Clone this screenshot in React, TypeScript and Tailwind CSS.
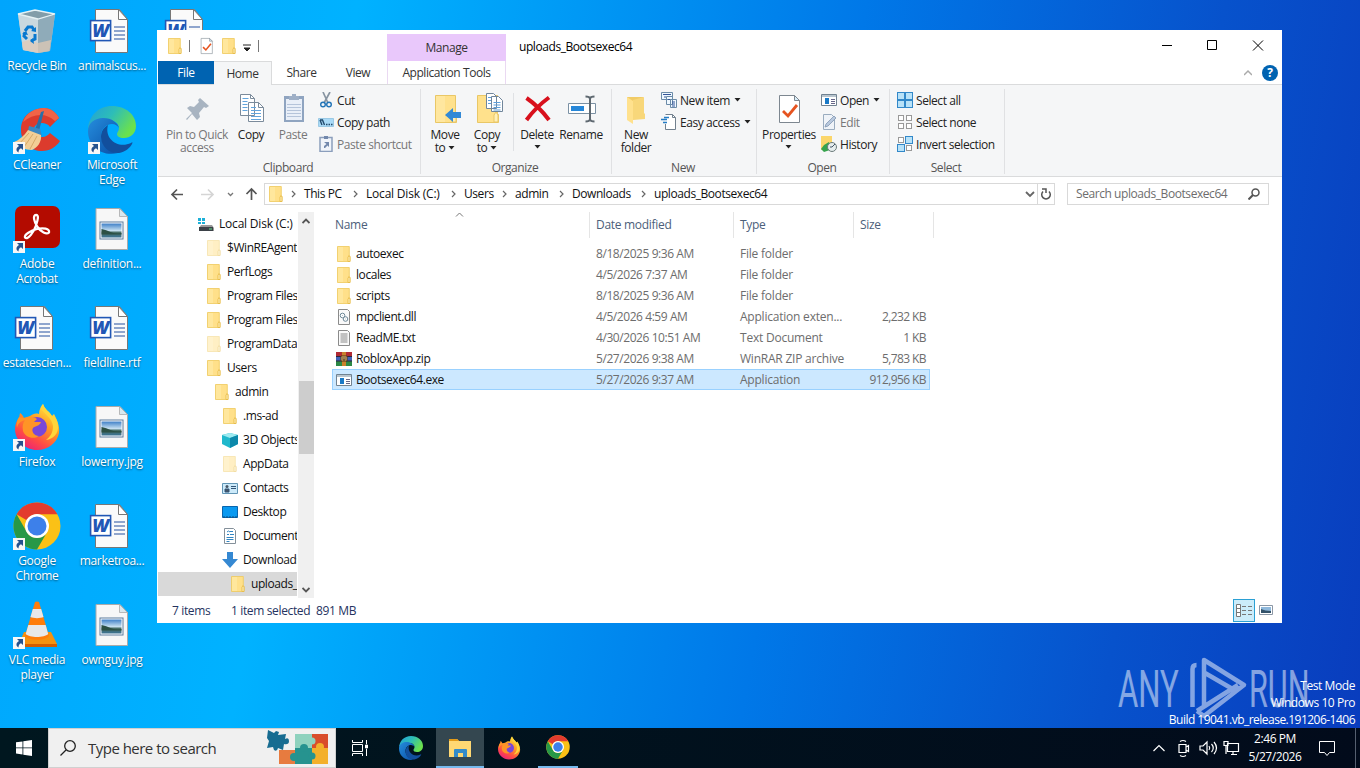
import type { ReactNode } from 'react';

type IconProps = { className?: string };

/* ---------- small shared icons ---------- */

const Folder = ({ className = 'w-4 h-4' }: IconProps) => (
  <svg className={className} viewBox="0 0 16 16">
    <path d="M1.500 .5h11.8v9l.7.8v5.2H1.500z" fill="#ffe08a" stroke="#efc95c" strokeWidth=".8" />
    <path d="M2 1h5v14H2z" fill="#ffe9a5" opacity=".7" />
    <path d="M12 11.200l1-1.700 1 1.500v4.500h-2z" fill="#fff0bd" stroke="#e6b73f" strokeWidth=".8" />
  </svg>
);

const FadedFolder = () => <Folder className="w-4 h-4 opacity-50" />;

const WordDoc = () => (
  <svg className="w-12 h-12" viewBox="2 -2 48 48">
    <path d="M9.500 .5h24l8 10v33h-32z" fill="#fafafa" stroke="#777" />
    <path d="M32.500 .5v10h9z" fill="#fff" stroke="#777" />
    <path d="M28 18h11M28 22h11M28 26h11M28 30h11" stroke="#24509f" strokeWidth="1.200" />
    <rect x="4.600" y="11.600" width="20" height="20" fill="#fff" stroke="#2157b5" strokeWidth="1.600" />
    <text x="14.600" y="28" textAnchor="middle" fontSize="18" fontWeight="800" fontStyle="italic" fontFamily="Open Sans, sans-serif" fill="#2157b5">W</text>
  </svg>
);

const JpgDoc = () => (
  <svg className="w-12 h-12" viewBox="1.500 -1 48 48">
    <defs>
      <linearGradient id="photo" x1="0" y1="0" x2="0" y2="1">
        <stop offset="0" stopColor="#3f80c8" />
        <stop offset=".5" stopColor="#c4def0" />
        <stop offset=".65" stopColor="#436a62" />
        <stop offset="1" stopColor="#3c7496" />
      </linearGradient>
    </defs>
    <path d="M9.500 2.500h24l7.500 8v33H9.500z" fill="#f7f7f7" stroke="#aaa" />
    <path d="M33 2.500v8h8z" fill="#d9e8ee" stroke="#aaa" strokeWidth=".8" />
    <rect x="13.500" y="16" width="23" height="17" fill="#fff" stroke="#5c7c9e" />
    <rect x="15" y="17.500" width="20" height="14" fill="url(#photo)" />
    <path d="M15 23q5 1 9 3t11 1v1.500H15z" fill="#2c5044" />
  </svg>
);

const Shortcut = () => (
  <svg className="absolute left-0 bottom-0 w-3 h-3" viewBox="0 0 12 12">
    <path d="M0 0h12v12H0z" fill="#f7f7f7" />
    <path d="M4 2h6v6L8 6.200C6 7 5.500 8.500 5.500 10.500 2.500 9 3 5.500 6 4z" fill="#26528e" />
  </svg>
);

const RecycleBin = () => (
  <svg className="w-12 h-12" viewBox="1 -2 48 48">
    <path d="M6 5l17-4 20 4-5 37-12 2-15-3z" fill="#a9c3d3" />
    <path d="M6 5l20 5 1 34-16-3z" fill="#c9d8df" />
    <path d="M26 10l17-5-5 37-12 2z" fill="#8fabb9" />
    <path d="M6 5l17-4 20 4-17 5z" fill="#829da9" stroke="#e6f2f5" strokeWidth="1.300" />
    <path d="M10 33l7-2 9 3v10l-15-3zM26 34l13-3-1.500 11-11.500 2z" fill="#e0c9b5" opacity=".75" />
    <path d="M13 22l3-4h4l2 3M23 25v5l-4 2M15 30l-3-3 1-4" fill="none" stroke="#0878cf" strokeWidth="3" />
    <path d="M19 22l5 1v-5zM21 29l-3 3 4 3zM10 25l4-3 2 4z" fill="#0878cf" />
  </svg>
);

const CCleaner = () => (
  <svg className="w-12 h-12" viewBox="0 2 48 48">
    <path d="M46 14l-9 9c-2-3-5-4-8-4-11 0-11 14 0 14 4 0 6-2 8-4l10 8c-4 6-10 10-18 10C18 47 8 39 8 26S17 5 31 4c6 0 12 4 15 10z" fill="#dc3b2d" />
    <path d="M10 18C13 9 22 4 31 4c6 0 12 4 15 10l-4 3C32 8 20 10 10 18z" fill="#f06448" />
    <path d="M28 8l3-1-5 20-4-1z" fill="#2870a8" />
    <path d="M16 22l11 3 2 7-14-5z" fill="#3b88c2" />
    <path d="M15 26l13 5c1 7-4 13-9 15-7 0-13-3-18-8 5-2 10-6 14-12z" fill="#f2ce96" />
    <path d="M16 29L6 40M20 30l-9 13M24 32l-7 13" stroke="#d7a968" />
  </svg>
);

const Edge = ({ className = 'w-12 h-12' }: IconProps) => (
  <svg className={className} viewBox="0 0 48 48">
    <defs>
      <linearGradient id="edgeTop" x1="0" y1="0" x2="1" y2=".5">
        <stop offset="0" stopColor="#229fd9" />
        <stop offset=".5" stopColor="#2dbdb8" />
        <stop offset="1" stopColor="#6be14d" />
      </linearGradient>
      <linearGradient id="edgeLow" x1="0" y1="0" x2="1" y2="1">
        <stop offset="0" stopColor="#258ddd" />
        <stop offset="1" stopColor="#0a4ea5" />
      </linearGradient>
    </defs>
    <path d="M0 23C1 10 10 0 24 0c14 0 24 9 24 20 0 8-6 12-12 12-5 0-7-2-7-4 0-2 2-3 2-6 0-5-5-8-11-8C11 14 3 16 0 23z" fill="url(#edgeTop)" />
    <path d="M0 25c0-8 7-13 15-13 9 0 15 5 16 10-1-2-4-4-7-4-6 0-11 5-11 12 0 9 8 16 17 17C13 51 0 40 0 25z" fill="url(#edgeLow)" />
    <path d="M20 19c-5 3-7 7-7 12 0 9 8 17 18 16 6-1 11-5 13-9 1-2 0-2-1-1-13 6-27-4-23-18z" fill="#124f9d" />
  </svg>
);

const Acrobat = () => (
  <svg className="w-12 h-12" viewBox="0 -1 48 48">
    <rect x="2" width="45" height="42" rx="7" fill="#b30b00" />
    <path d="M23 9c-3.500 0-2 7 1.500 12s9 8 11.500 5.500c1-4-6-5-12-3.500s-13 5.500-12 8.500c3 3 9-6 11-12s3-10.500 0-10.500z" fill="none" stroke="#fff" strokeWidth="2.300" />
  </svg>
);

const Firefox = ({ className = 'w-12 h-12' }: IconProps) => (
  <svg className={className} viewBox="0 0 48 48">
    <defs>
      <linearGradient id="fox" x1=".8" y1="0" x2=".2" y2="1">
        <stop offset="0" stopColor="#fff14a" />
        <stop offset=".4" stopColor="#ff9a22" />
        <stop offset=".72" stopColor="#ff4b45" />
        <stop offset="1" stopColor="#e81b80" />
      </linearGradient>
    </defs>
    <path d="M26 11c0-4 2-8 4-10 2 6 6 7 9 12l2-2c3 6 6 12 5 19-2 10-11 17-22 17S2 38 2 26c0-5 2-9 4-11l1-5c2 1 3 3 4 5l6-2c3-2 5-3 9-2z" fill="url(#fox)" />
    <circle cx="24" cy="24" r="10" fill="#7947d8" />
    <path d="M28 6c4 5 11 9 12 17 0 7-3 11-7 14 7-1 13-6 12-15-1-7-4-9-6-9-3-5-7-6-9-12-1 2-2 4-2 5z" fill="#ffd53a" />
    <path d="M6 14l5 1c4-1 9-2 13 1l-3 3h7c-1 4-6 4-8 6-2 3 1 8 6 8-6 4-14 1-16-5-1-5 0-8 2-11-4 1-7 3-8 8-1-4 0-8 2-11z" fill="#ff9426" />
  </svg>
);

const Chrome = ({ className = 'w-12 h-12' }: IconProps) => (
  <svg className={className} viewBox="0 0 48 48">
    <circle cx="24" cy="24" r="23.500" fill="#fbc116" />
    <path d="M3.600 12.300A23.500 23.500 0 0 1 44.400 12.300H24a11.700 11.700 0 0 0-10.300 6z" fill="#e33b2e" />
    <path d="M3.600 12.300A23.500 23.500 0 0 0 24 47.500l10.200-17.600a11.700 11.700 0 0 1-20.400 0z" fill="#279847" />
    <circle cx="24" cy="24" r="12" fill="#fff" />
    <circle cx="24" cy="24" r="9.500" fill="#3d80ea" />
  </svg>
);

const Vlc = () => (
  <svg className="w-12 h-12" viewBox="0 0 48 48">
    <path d="M11 31h27l6 12H6z" fill="#f5920f" />
    <path d="M6 43h38v3H6z" fill="#d45e00" />
    <path d="M22 1q2-1 4 0l10 34c-4 5-20 5-24 0z" fill="#ff7d0a" />
    <path d="M19.800 8h8.400l2.300 8c-3 1.500-10 1.500-13 0zM15.300 24h17.400l2.500 9c-4 4-18.500 4-22.500 0z" fill="#e8e8e8" />
  </svg>
);

const desktopIcons: { label: string; icon: ReactNode; link?: boolean }[] = [
  { label: 'Recycle Bin', icon: <RecycleBin /> },
  { label: 'CCleaner', icon: <CCleaner />, link: true },
  { label: 'Adobe Acrobat', icon: <Acrobat />, link: true },
  { label: 'estatescien...', icon: <WordDoc /> },
  { label: 'Firefox', icon: <Firefox />, link: true },
  { label: 'Google Chrome', icon: <Chrome />, link: true },
  { label: 'VLC media player', icon: <Vlc />, link: true },
  { label: 'animalscus...', icon: <WordDoc /> },
  { label: 'Microsoft Edge', icon: <Edge />, link: true },
  { label: 'definition...', icon: <JpgDoc /> },
  { label: 'fieldline.rtf', icon: <WordDoc /> },
  { label: 'lowerny.jpg', icon: <JpgDoc /> },
  { label: 'marketroa...', icon: <WordDoc /> },
  { label: 'ownguy.jpg', icon: <JpgDoc /> },
  { label: '', icon: <WordDoc /> },
];

const Desktop = () => (
  <div className="grid grid-flow-col grid-rows-[repeat(7,99px)] auto-cols-[75px] w-fit pt-[7px] -ml-[0.5px] tracking-[-0.3px]">
    {desktopIcons.map((item, i) => (
      <div key={i} className="flex flex-col items-center text-white">
        <div className="relative w-12 h-12">
          {item.icon}
          {item.link && <Shortcut />}
        </div>
        <span className="w-[73px] mt-[3px] text-center leading-[15px] [text-shadow:0_1px_2px_#0008]">{item.label}</span>
      </div>
    ))}
  </div>
);

/* ---------- ribbon ---------- */

const Caret = () => (
  <svg className="inline-block w-[7px] h-1 shrink-0" viewBox="0 0 7 4">
    <path d="M.5 0h6l-3 3.500z" fill="#222" />
  </svg>
);

const BigButton = ({ icon, lines, width, disabled, caret }: { icon: ReactNode; lines: string[]; width: string; disabled?: boolean; caret?: boolean }) => (
  <div className={`flex flex-col items-center pt-2 ${width} ${disabled ? 'text-[#777]' : 'text-[#222]'}`}>
    <span className="pl-px">{icon}</span>
    <div className="mt-[3px] flex flex-col items-center leading-[13px] whitespace-nowrap">
      {lines.map((line, i) => (
        <span key={line} className="flex items-center gap-[3px] h-[13px]">
          {line}
          {caret && i === lines.length - 1 && <Caret />}
        </span>
      ))}
    </div>
  </div>
);

const SmallButton = ({ icon, label, disabled, caret }: { icon: ReactNode; label: string; disabled?: boolean; caret?: boolean }) => (
  <div className={`flex items-center h-[22px] whitespace-nowrap ${disabled ? 'text-[#777]' : 'text-[#222]'}`}>
    {icon}
    <span className="ml-[3px] pt-px">{label}</span>
    {caret && <span className="ml-1 flex"><Caret /></span>}
  </div>
);

const Group = ({ title, width, children }: { title: string; width: string; children: ReactNode }) => (
  <div className={`relative flex flex-col h-[91px] ${width}`}>
    <div className="flex h-[76px]">{children}</div>
    <div className="pr-[3px] text-center text-[#555] leading-[14px]">{title}</div>
    <div className="absolute right-0 top-1 h-[85px] w-px bg-[#e0e1e3]" />
  </div>
);

const Pages = ({ className = 'w-8 h-8' }: IconProps) => (
  <svg className={className} viewBox="0 0 32 32">
    <path d="M4.500 1.500h10l4 4v17h-14zM12.500 9.500h10l5 5v14h-15z" fill="#fff" stroke="#7b8b9b" />
    <path d="M14.500 1.500v4h4M22.500 9.500v5h5" fill="none" stroke="#7b8b9b" />
    <path d="M6.500 5.500h6M6.500 8.500h5M6.500 11.500h5M6.500 14.500h5M6.500 17.500h5M15 14.500h5M15 17.500h10M15 20.500h10M15 23.500h10M15 26.500h10" stroke="#62a4dc" />
  </svg>
);

const TallFolder = ({ children }: { children?: ReactNode }) => (
  <svg className="w-8 h-8" viewBox="0 0 32 32">
    <path d="M5.500 2.500h20v18l1 1v8h-21z" fill="#ffe18c" stroke="#e9c766" />
    <path d="M6 3h9v26H6z" fill="#ffe9a6" opacity=".7" />
    <path d="M22 29v-7l2-3 2 3v7z" fill="#fff0ba" stroke="#e9c766" />
    {children}
  </svg>
);

const Clipboard = () => (
  <svg className="w-8 h-8" viewBox="0 0 32 32">
    <path d="M6 3h20v26H6z" fill="#8fa4c0" />
    <path d="M8 6h16v21H8z" fill="#e9eff8" />
    <path d="M11 3h3V1h4v2h3v4H11z" fill="#9eafc6" />
    <path d="M9 11.500h14M9 14.500h14M9 17.500h14M9 20.500h14M9 23.500h14" stroke="#b5c4da" />
  </svg>
);

const Square = ({ x, y, on }: { x: number; y: number; on: boolean }) => (
  <rect x={x} y={y} width={on ? 7 : 5} height={on ? 7 : 5} fill={on ? '#b8e2f8' : '#fff'} stroke={on ? '#3288c9' : '#999'} />
);

const FileCheck = ({ className = 'w-4 h-4' }: IconProps) => (
  <svg className={className} viewBox="0 0 32 32">
    <path d="M5.500 2.500h15l5 5v22h-20z" fill="#fff" stroke="#7d8790" />
    <path d="M20.500 2.500v5h5z" fill="#d9eefa" stroke="#7d8790" />
    <path d="M9 18l5 5 9-11" fill="none" stroke="#e65420" strokeWidth="2.800" />
  </svg>
);

const AppIcon = () => (
  <svg className="w-4 h-4 shrink-0" viewBox="0 0 16 16">
    <path d="M.5 2.500h15v11H.5z" fill="#fff" stroke="#718291" />
    <path d="M1 3h14v2H1z" fill="#b9c5ce" />
    <path d="M4 6h4v6H4z" fill="#1979c7" />
    <path d="M10 7.500h4M10 9.500h4M10 11.500h4" stroke="#668" />
  </svg>
);

const Ribbon = () => (
  <div className="flex h-[93px] border-y border-[#dadbdc] bg-[#f5f6f7]">
    <Group title="Clipboard" width="w-[263px]">
      <BigButton
        width="w-[70px] ml-1" disabled lines={['Pin to Quick', 'access']}
        icon={<svg className="w-8 h-8" viewBox="0 0 32 32"><path d="M18 5l9 8-3 2-2-1-5 6 1 4-3 3-5-6-5 6-1-1 6-6-5-5 3-2 4 1 5-5-1-2z" fill="#a8b4c1" /></svg>}
      />
      <BigButton width="w-[38px]" lines={['Copy']} icon={<Pages />} />
      <BigButton width="w-[42px] ml-0.5" disabled lines={['Paste']} icon={<Clipboard />} />
      <div className="flex flex-col pt-1 ml-1">
        <SmallButton label="Cut" icon={
          <svg className="w-4 h-4" viewBox="0 0 16 16">
            <path d="M5 0l5 11M12 0L6 11" stroke="#8794a1" strokeWidth="1.700" />
            <circle cx="5" cy="12.500" r="2.300" fill="none" stroke="#2274b7" strokeWidth="1.400" />
            <circle cx="11" cy="12.500" r="2.300" fill="none" stroke="#2274b7" strokeWidth="1.400" />
          </svg>
        } />
        <SmallButton label="Copy path" icon={
          <svg className="w-4 h-4" viewBox="0 0 16 16">
            <path d="M.5 4.500h15v8H.5z" fill="#a9daf7" stroke="#9bc9e4" />
            <path d="M2 6l2 5M4.500 6l2 5M2 6h3M8 10.500h1.500M10.500 10.500H12M13 10.500h1.500" stroke="#234a6c" strokeWidth="1.400" />
          </svg>
        } />
        <SmallButton disabled label="Paste shortcut" icon={
          <svg className="w-4 h-4" viewBox="0 0 16 16">
            <path d="M2 1.500h12v14H2z" fill="#f0f4fa" stroke="#8b9ebc" strokeWidth="1.500" />
            <path d="M6 0h4v3H6zM6 6h5v5L9.500 9.500 7 12H6v-2l2.500-2z" fill="#7288ac" />
          </svg>
        } />
      </div>
    </Group>
    <Group title="Organize" width="w-[191px]">
      <BigButton width="w-11 ml-0.5" caret lines={['Move', 'to']} icon={
        <TallFolder><path d="M15 22l8-7v4h8v6h-8v4z" fill="#3289d6" /></TallFolder>
      } />
      <BigButton width="w-10" caret lines={['Copy', 'to']} icon={
        <svg className="w-8 h-8" viewBox="0 0 32 32">
          <path d="M5.500 2.500h20v18l1 1v8h-21z" fill="#ffe18c" stroke="#e9c766" />
          <path d="M22 29v-7l2-3 2 3v7z" fill="#fff0ba" stroke="#e9c766" />
          <path d="M14.500 .5h7l3 3v12h-10zM19.500 3.500h7l4 4v11h-11z" fill="#fff" stroke="#71869b" />
          <path d="M16 4.500h3M16 7.500h3M16 10.500h3M21.500 9.500h7M21.500 12h7M21.500 14.500h7M21.500 17h7" stroke="#5d9fda" />
        </svg>
      } />
      <div className="w-px h-[58px] mt-2 ml-1.5 bg-[#dfe1e4]" />
      <div className="relative">
        <BigButton width="w-10 ml-[3px]" lines={['Delete']} icon={
          <svg className="w-8 h-8" viewBox="0 0 32 32"><path d="M4.500 5q13 9 22.500 22M27 4.500Q14 14 4.500 27" fill="none" stroke="#d8101c" strokeWidth="4" /></svg>
        } />
        <span className="absolute left-5 top-[60px] flex"><Caret /></span>
      </div>
      <BigButton width="w-[48px]" lines={['Rename']} icon={
        <svg className="w-8 h-8" viewBox="0 0 32 32">
          <path d="M2.500 10.500h27v10h-27z" fill="#fff" stroke="#7b91a4" />
          <path d="M5 13h13v5H5z" fill="#2687d9" />
          <path d="M19.500 3.500q4 0 4.500 2 .5-2 4.500-2M24 5v22M19.500 28.500q4 0 4.500-2 .5 2 4.500 2" fill="none" stroke="#5e6870" strokeWidth="2" />
        </svg>
      } />
    </Group>
    <Group title="New" width="w-[145px]">
      <BigButton width="w-[42px] ml-[3px]" lines={['New', 'folder']} icon={
        <svg className="w-8 h-8" viewBox="0 0 32 32">
          <path d="M6 4h16v22H6z" fill="#f1cb66" />
          <path d="M6 4l6 4v23l-6-4z" fill="#ffe18d" />
          <path d="M12 7l11-3v16l1 1v5l-12 1z" fill="#f8d77a" />
        </svg>
      } />
      <div className="flex flex-col pt-1 ml-1">
        <SmallButton caret label="New item" icon={
          <svg className="w-4 h-4" viewBox="0 0 16 16">
            <path d="M.5.500h11v7H.5zM5.500 4.500h6v8h-6zM9.500 7.500h6v8h-6z" fill="#eff8ff" stroke="#6b8ba8" />
            <path d="M2 2.500h8M3 5h2M11 10h3M11 12h3M11 14h3M7 7.500h2" stroke="#359" />
          </svg>
        } />
        <SmallButton caret label="Easy access" icon={
          <svg className="w-4 h-4" viewBox="0 0 16 16">
            <path d="M4.500.500h7l3 3v12h-10V10" fill="#fff" stroke="#71808e" />
            <path d="M11.500.500v3h3" fill="none" stroke="#71808e" />
            <path d="M3 3.500h5M0 5.500h6M2 8.500h4" stroke="#257dc5" strokeWidth="1.500" />
          </svg>
        } />
      </div>
    </Group>
    <Group title="Open" width="w-[133px]">
      <div className="relative">
        <BigButton width="w-[54px] ml-[5px]" lines={['Properties']} icon={<FileCheck className="w-8 h-8" />} />
        <span className="absolute left-[28px] top-[60px] flex"><Caret /></span>
      </div>
      <div className="flex flex-col pt-1 ml-[5px]">
        <SmallButton caret label="Open" icon={<AppIcon />} />
        <SmallButton disabled label="Edit" icon={
          <svg className="w-4 h-4" viewBox="0 0 16 16">
            <path d="M2.500.500h8l3 3v12h-11z" fill="#eff3f8" stroke="#9aacbf" />
            <path d="M13 2l2 2-8 8-3 1 1-3z" fill="#b8c8dd" stroke="#8297b2" strokeWidth=".8" />
          </svg>
        } />
        <SmallButton label="History" icon={
          <svg className="w-4 h-4" viewBox="0 0 16 16">
            <path d="M0 0h11v14H0z" fill="#fbd66b" />
            <path d="M3 9l5-3 1 8-6 2-3-3z" fill="#36a34d" />
            <circle cx="11" cy="11" r="4.500" fill="#e6eded" stroke="#6b7b7b" />
            <path d="M14 8l-3 3H9" stroke="#456" fill="none" />
          </svg>
        } />
      </div>
    </Group>
    <Group title="Select" width="w-[115px]">
      <div className="flex flex-col pt-1 ml-[7px]">
        <SmallButton label="Select all" icon={<svg className="w-4 h-4" viewBox="0 0 16 16"><Square x={.5} y={.5} on /><Square x={8.500} y={.5} on /><Square x={.5} y={8.500} on /><Square x={8.500} y={8.500} on /></svg>} />
        <SmallButton label="Select none" icon={<svg className="w-4 h-4" viewBox="0 0 16 16"><Square x={1.500} y={1.500} on={false} /><Square x={9.500} y={1.500} on={false} /><Square x={1.500} y={9.500} on={false} /><Square x={9.500} y={9.500} on={false} /></svg>} />
        <SmallButton label="Invert selection" icon={<svg className="w-4 h-4" viewBox="0 0 16 16"><Square x={1.500} y={1.500} on={false} /><Square x={8.500} y={.5} on /><Square x={.5} y={8.500} on /><Square x={9.500} y={9.500} on={false} /></svg>} />
      </div>
    </Group>
  </div>
);

/* ---------- title bar, tabs, address bar ---------- */

const TitleBar = () => (
  <div className="flex h-[54px]">
    <div className="w-[229px] flex flex-col">
      <div className="h-[31px] flex items-center pl-[9px]">
        <Folder />
        <div className="w-px h-3 ml-1.5 bg-[#777]" />
        <FileCheck className="w-[18px] h-[18px] ml-2" />
        <Folder className="w-4 h-4 ml-[5px]" />
        <svg className="w-2 h-2 ml-1.5 mt-1" viewBox="0 0 8 8"><path d="M0 1h8M1 4h6L4 7z" fill="#222" stroke="#222" /></svg>
        <div className="w-px h-3 ml-[7px] bg-[#777]" />
      </div>
      <div className="h-[23px] flex items-stretch leading-6 text-center text-[#333]">
        <div className="w-14 bg-[#0063b1] text-white">File</div>
        <div className="relative z-10 w-[58px] h-6 bg-[#f5f6f7] border-t border-r border-[#dadbdc] leading-[23px]">Home</div>
        <div className="w-[59px]">Share</div>
        <div className="w-[54px]">View</div>
      </div>
    </div>
    <div className="w-[119px] flex flex-col text-center text-[#333]">
      <div className="h-[27px] mt-1 bg-[#e9c8fb] leading-7">Manage</div>
      <div className="h-[23px] border-x border-[#ead9f2] leading-6">Application Tools</div>
    </div>
    <div className="flex-1 pl-[13px] leading-[33px] text-black">uploads_Bootsexec64</div>
    <div className="w-[138px] flex flex-col">
      <div className="h-[31px] flex items-center pl-[18px]">
        <svg className="w-[102px] h-[11px]" viewBox="0 0 102 11">
          <path d="M0 5.500h10M45.500.500h9v9h-9zM91 .5l10 10M101 .5l-10 10" fill="none" stroke="#000" />
        </svg>
      </div>
      <div className="h-[23px] flex items-center pl-[100px]">
        <svg className="w-2 h-2" viewBox="0 0 8 8"><path d="M0 6l4-4 4 4" fill="none" stroke="#aaa" strokeWidth="1.500" /></svg>
        <div className="w-4 h-4 ml-[10px] rounded-full bg-[#0063b1] text-white font-bold text-[12px] leading-4 text-center">?</div>
      </div>
    </div>
  </div>
);

const crumbs = [
  { name: 'This PC', width: 'w-[62px]' },
  { name: 'Local Disk (C:)', width: 'w-[98px] tracking-[-0.2px]' },
  { name: 'Users', width: 'w-[51px]' },
  { name: 'admin', width: 'w-[57px]' },
  { name: 'Downloads', width: 'w-[82px]' },
  { name: 'uploads_Bootsexec64', width: 'w-[130px]' },
];

const AddressBar = () => (
  <div className="flex h-[35px] pt-1.5 pl-3">
    <svg className="w-[88px] h-[22px] mr-1.5" viewBox="0 0 88 22" fill="none" strokeWidth="1.700">
      <path d="M13 11.500H2M7 6.500l-5 5 5 5" stroke="#555" />
      <path d="M31 11.500h12M38 6.500l5 5-5 5" stroke="#d5d5d5" />
      <path d="M58 10l2.500 2.500L63 10" stroke="#777" strokeWidth="1.300" />
      <path d="M81.500 17V6M76.500 11l5-5 5 5" stroke="#555" />
    </svg>
    <div className="flex items-center w-[791px] h-[22px] border border-[#d9d9d9] text-[#111]">
      <Folder className="w-4 h-4 ml-[3px]" />
      {crumbs.map(crumb => (
        <div key={crumb.name} className={`flex items-center ${crumb.width}`}>
          <svg className="w-[5px] h-2 ml-[7px] mr-2 shrink-0" viewBox="0 0 5 8"><path d="M1 1l3 3-3 3" fill="none" stroke="#666" strokeWidth="1.200" /></svg>
          <span className="whitespace-nowrap">{crumb.name}</span>
        </div>
      ))}
      <div className="flex-1" />
      <svg className="w-2.5 h-2 mr-0.5" viewBox="0 0 10 8"><path d="M1 2l4 4 4-4" fill="none" stroke="#666" strokeWidth="1.800" /></svg>
      <div className="flex items-center justify-center w-[17px] h-5 border-l border-[#d9d9d9]">
        <svg className="w-3 h-3" viewBox="0 0 12 12"><path d="M3 3.500a4.300 4.300 0 1 0 6 0M2 1h4v4" fill="none" stroke="#555" strokeWidth="1.500" /></svg>
      </div>
    </div>
    <div className="flex items-center justify-between w-[202px] h-[22px] ml-3 pl-2 pr-2 border border-[#d9d9d9] text-[#6d6d6d]">
      Search uploads_Bootsexec64
      <svg className="w-3 h-3" viewBox="0 0 12 12"><circle cx="7.500" cy="4.500" r="3.500" fill="none" stroke="#555" strokeWidth="1.500" /><path d="M5 7L.5 11.500" stroke="#555" strokeWidth="2" /></svg>
    </div>
  </div>
);

/* ---------- tree and file list ---------- */

const tree = [
  { name: 'Local Disk (C:)', pad: 'pl-10 tracking-[-0.2px]', icon: (
    <svg className="w-4 h-4" viewBox="0 0 16 16"><path d="M0 2h3v3H0zM4 2h3v3H4zM0 6h3v2H0zM4 6h3v2H4z" fill="#1cb0d8" /><path d="M3 9h11l2 3v3H1v-3z" fill="#999" /><path d="M1 11h14v4H1z" fill="#3b4148" /><path d="M11 13h3" stroke="#63e18b" /></svg>
  ) },
  { name: '$WinREAgent', pad: 'pl-12', icon: <FadedFolder /> },
  { name: 'PerfLogs', pad: 'pl-12', icon: <Folder /> },
  { name: 'Program Files', pad: 'pl-12', icon: <Folder /> },
  { name: 'Program Files (x86)', pad: 'pl-12', icon: <Folder /> },
  { name: 'ProgramData', pad: 'pl-12', icon: <FadedFolder /> },
  { name: 'Users', pad: 'pl-12', icon: <Folder /> },
  { name: 'admin', pad: 'pl-14', icon: <Folder /> },
  { name: '.ms-ad', pad: 'pl-16', icon: <Folder /> },
  { name: '3D Objects', pad: 'pl-16', icon: (
    <svg className="w-4 h-4" viewBox="0 0 16 16"><path d="M0 3l8-2 8 2v9l-8 4-8-4z" fill="#20b8cc" /><path d="M0 3l8 3 8-3-8-2z" fill="#9eeaf0" /><path d="M8 6v10l8-4V3z" fill="#0c88aa" /></svg>
  ) },
  { name: 'AppData', pad: 'pl-16', icon: <FadedFolder /> },
  { name: 'Contacts', pad: 'pl-16', icon: (
    <svg className="w-4 h-4" viewBox="0 0 16 16"><path d="M.5 3.500h15v10H.5z" fill="#cceafa" stroke="#6195b5" /><circle cx="5" cy="6.500" r="1.500" fill="#456" /><path d="M3 12v-3h4v3zM9 6.500h5M9 8.500h5" fill="#456" stroke="#357" /></svg>
  ) },
  { name: 'Desktop', pad: 'pl-16', icon: (
    <svg className="w-4 h-4" viewBox="0 0 16 16"><path d="M.5 2.500h15v11H.5z" fill="#0a99f0" stroke="#0865ae" /><path d="M1 13h14" stroke="#104c78" strokeDasharray="2 1" /></svg>
  ) },
  { name: 'Documents', pad: 'pl-16', icon: (
    <svg className="w-4 h-4" viewBox="0 0 16 16"><path d="M2.500.500h9l2 2v13h-11z" fill="#fff" stroke="#84909a" /><path d="M5 4l1.500-1L8 4M8 3.500h3M5 6.500h2M8 6.500h4M4.500 9.500h7M4.500 11.500h7M4.500 13.500h3" fill="none" stroke="#3185c2" /></svg>
  ) },
  { name: 'Downloads', pad: 'pl-16', icon: (
    <svg className="w-4 h-4" viewBox="0 0 16 16"><path d="M5 0h6v7h5l-8 9-8-9h5z" fill="#3588d2" /></svg>
  ) },
  { name: 'uploads_Bootsexec64', pad: 'pl-[72px]', icon: <Folder />, active: true },
];

const DocIcon = ({ gear }: { gear?: boolean }) => (
  <svg className="w-4 h-4" viewBox="0 0 16 16">
    <path d="M2.500.500h9l2 2v13h-11z" fill="#fafafa" stroke="#8b8b8b" />
    {gear ? (
      <g fill="#fff" stroke="#6c8797"><circle cx="6.500" cy="6.500" r="2.300" /><circle cx="9.500" cy="10" r="2.300" /><path d="M6.500 6.500h.5M9.500 10h.5" /></g>
    ) : (
      <path d="M4.500 4h7M4.500 6h7M4.500 8h7M4.500 10h7M4.500 12h7" stroke="#8a8a8a" />
    )}
  </svg>
);

const RarIcon = () => (
  <svg className="w-4 h-4" viewBox="0 0 16 16">
    <path d="M0 1h16v5H0z" fill="#b02a34" />
    <path d="M0 6h16v4H0z" fill="#3f62b8" />
    <path d="M0 10h16v5H0z" fill="#2b8846" />
    <path d="M0 5.500h16M0 10h16" stroke="#2b243a" />
    <path d="M6 1h4v14H6z" fill="#c9812c" />
    <path d="M5 5h6v5H5z" fill="#e9cd8a" stroke="#573417" />
    <path d="M7 6v3h2V6" fill="none" stroke="#573417" />
  </svg>
);

const files = [
  { name: 'autoexec', date: '8/18/2025 9:36 AM', type: 'File folder', size: '', icon: <Folder /> },
  { name: 'locales', date: '4/5/2026 7:37 AM', type: 'File folder', size: '', icon: <Folder /> },
  { name: 'scripts', date: '8/18/2025 9:36 AM', type: 'File folder', size: '', icon: <Folder /> },
  { name: 'mpclient.dll', date: '4/5/2026 4:59 AM', type: 'Application exten...', size: '2,232 KB', icon: <DocIcon gear /> },
  { name: 'ReadME.txt', date: '4/30/2026 10:51 AM', type: 'Text Document', size: '1 KB', icon: <DocIcon /> },
  { name: 'RobloxApp.zip', date: '5/27/2026 9:38 AM', type: 'WinRAR ZIP archive', size: '5,783 KB', icon: <RarIcon /> },
  { name: 'Bootsexec64.exe', date: '5/27/2026 9:37 AM', type: 'Application', size: '912,956 KB', icon: <AppIcon />, selected: true },
];

const Explorer = () => (
  <div className="absolute left-[157px] top-[30px] w-[1125px] h-[593px] pl-px bg-white flex flex-col">
    <TitleBar />
    <Ribbon />
    <AddressBar />
    <div className="flex h-[386px]">
      <div className="w-[139px] overflow-hidden">
        {tree.map((node, i) => (
          <div key={i} className={`flex items-center h-6 whitespace-nowrap text-[#111] ${node.pad} ${node.active ? 'bg-[#d9d9d9]' : ''}`}>
            <span className="shrink-0">{node.icon}</span>
            <span className="ml-[5px]">{node.name}</span>
          </div>
        ))}
      </div>
      <div className="flex flex-col items-center w-4 ml-px bg-[#f0f0f0]">
        <svg className="w-2 h-[17px]" viewBox="0 0 8 17"><path d="M.5 11L4 7.500 7.500 11" fill="none" stroke="#555" strokeWidth="1.800" /></svg>
        <div className="w-[15px] h-[73px] mt-[152px] bg-[#cdcdcd]" />
        <div className="flex-1" />
        <svg className="w-2 h-[17px]" viewBox="0 0 8 17"><path d="M.5 7L4 10.500 7.500 7" fill="none" stroke="#555" strokeWidth="1.800" /></svg>
      </div>
      <div className="ml-[18px] w-[602px]">
        <div className="relative flex h-[26px] leading-[26px] text-[#4c607a] tracking-[-0.3px]">
          <div className="w-[258px] pl-[3px] border-r border-[#e5e5e5]">Name</div>
          <div className="w-[144px] pl-1.5 border-r border-[#e5e5e5]">Date modified</div>
          <div className="w-[120px] pl-1.5 border-r border-[#e5e5e5]">Type</div>
          <div className="w-20 pl-1.5 border-r border-[#e5e5e5]">Size</div>
          <svg className="absolute left-[123px] top-0 w-[9px] h-[5px]" viewBox="0 0 9 5"><path d="M1 4.500l3.500-3.500L8 4.500" fill="none" stroke="#777" /></svg>
        </div>
        <div className="pt-[5px]">
          {files.map(file => (
            <div key={file.name} className={`flex items-center w-[598px] h-[21px] pl-1 whitespace-nowrap text-[#6d6d6d] ${file.selected ? 'bg-[#cce8ff] outline outline-1 -outline-offset-1 outline-[#99d1ff]' : ''}`}>
              {file.icon}
              <span className="w-[244px] shrink-0 pl-1 text-[#111]">{file.name}</span>
              <span className="w-[144px] shrink-0">{file.date}</span>
              <span className="w-[116px] shrink-0 tracking-[-0.22px]">{file.type}</span>
              <span className="w-[70px] shrink-0 text-right tracking-[-0.6px]">{file.size}</span>
            </div>
          ))}
        </div>
      </div>
    </div>
    <div className="flex items-center h-[25px] pl-3.5 text-[#25335f] tracking-[-0.36px]">
      <span className="w-[59px]">7 items</span>
      <span className="w-[85px] whitespace-nowrap">1 item selected</span>
      <span className="flex-1">891 MB</span>
      <div className="flex items-center justify-center w-[22px] h-[23px] bg-[#cbecfa] border border-[#2ba0d4]">
        <svg className="w-4 h-3.5" viewBox="0 0 16 14"><path d="M.5.500h4v12h-4zM1 4.500h3M1 8.500h3" fill="#fff" stroke="#777" /><path d="M6 2.500h4M6 6.500h4M6 10.500h4M12 2.500h4M12 6.500h4M12 10.500h4" stroke="#777" /></svg>
      </div>
      <svg className="w-3.5 h-2.5 ml-1 mr-[9px] -mt-0.5" viewBox="0 0 14 10"><path d="M.5.500h13v9H.5z" fill="#fff" stroke="#8b97a5" /><path d="M2 2h10v6H2z" fill="#8fb9dc" /><path d="M2 4q4 2 10 2v2H2z" fill="#33526a" /></svg>
    </div>
  </div>
);

/* ---------- watermark ---------- */

const Watermark = () => (
  <>
    <div className="absolute left-[1118px] top-[655px] w-[195px] h-[66px] flex items-center font-['Roboto',sans-serif] text-[51px] leading-[66px] tracking-normal text-white opacity-50">
      <span className="w-[70px] pt-1"><span className="inline-block origin-left scale-x-[.61]">ANY</span></span>
      <svg className="w-[60px] h-[66px] shrink-0" viewBox="0 0 60 66" fill="none" stroke="#fff" strokeWidth="4.500" strokeLinejoin="round">
        <path d="M4.500 52V14q0-4 4-4M16 50V5L56 30 16 61l-7-5M17 18l31 18M9 56l41-26" />
      </svg>
      <span className="ml-px pt-1"><span className="inline-block origin-left scale-x-[.6]">RUN</span></span>
    </div>
    <div className="absolute right-[5px] top-[677px] text-right text-white leading-[17px] whitespace-nowrap">
      <div>Test Mode</div>
      <div>Windows 10 Pro</div>
      <div className="tracking-[-0.52px]">Build 19041.vb_release.191206-1406</div>
    </div>
  </>
);

/* ---------- taskbar ---------- */

const Taskbar = () => (
  <div className="absolute bottom-0 left-0 flex w-full h-10 bg-linear-to-r from-[#00171f] to-[#020b1b]">
    <div className="flex items-center justify-center w-12">
      <svg className="w-4 h-4" viewBox="0 0 16 16" fill="#fff"><path d="M0 2.300l6.500-.9v6.100H0zM7.300 1.300L16 0v7.500H7.300zM0 8.300h6.500v6.200L0 13.600zM7.300 8.300H16V16l-8.700-1.300z" /></svg>
    </div>
    <div className="flex items-center w-72 bg-[#f0f0f0] border border-[#d0d0d0] text-[#333]">
      <svg className="w-4 h-4 ml-[11px]" viewBox="0 0 16 16"><circle cx="10" cy="6" r="5.300" fill="none" stroke="#222" strokeWidth="1.300" /><path d="M6 10L.5 15.500" stroke="#222" strokeWidth="1.300" /></svg>
      <span className="ml-3 text-[15px] tracking-[-0.52px] flex-1">Type here to search</span>
      <svg className="w-[64px] h-9 mr-[5px]" viewBox="0 0 64 36">
        <path d="M13 20h17v14H13z" fill="#e77b3f" />
        <path d="M29 4h17v14H29z" fill="#8fd2be" />
        <path d="M29 18h17v16H29z" fill="#26938f" />
        <path d="M46 4h16v14H46z" fill="#d94d2b" />
        <path d="M46 18h16v16H46z" fill="#f3b02b" />
        <circle cx="38" cy="18" r="4" fill="#26938f" /><circle cx="46" cy="11" r="3.500" fill="#8fd2be" />
        <circle cx="54" cy="17" r="4" fill="#f3b02b" /><circle cx="46" cy="26" r="3.500" fill="#26938f" /><circle cx="28" cy="27" r="4" fill="#26938f" />
        <path d="M2 0l6 3 2-2 3 1-1 3 8-1-1 5q4-2 4 2t-5 3l-1 6-5-2q-1 4-4 2l-1-3-6 1 2-7-2-3z" fill="#176c91" />
      </svg>
    </div>
    <div className="flex items-center justify-center w-12">
      <svg className="w-[18px] h-4" viewBox="0 0 18 16" fill="none" stroke="#fff"><path d="M1.500 0v2.500h10V0M1.500 4.500h10v7h-10zM1.500 16v-2.500h10V16M15.500 0v4M15.500 9v7" /><path d="M14.500 5h2v3h-2z" fill="#fff" /></svg>
    </div>
    <div className="flex items-center justify-center w-[50px] ml-0.5"><Edge className="w-6 h-6" /></div>
    <div className="flex items-center justify-center w-12 bg-[#344750] border-b-2 border-[#76b9ed]">
      <svg className="w-6 h-6 mt-0.5" viewBox="0 0 24 24">
        <path d="M1 3h8l2 2h12v16H1z" fill="#ffd873" />
        <path d="M1 3h8l2 2H1z" fill="#e39b18" />
        <path d="M6 21v-7q0-1 1-1h11q1 0 1 1v7h-4v-4h-5v4z" fill="#348bc8" />
      </svg>
    </div>
    <div className="flex items-center justify-center w-[50px]"><Firefox className="w-6 h-6" /></div>
    <div className="flex items-center justify-center w-10 ml-1 border-b-2 border-[#76b9ed]"><Chrome className="w-6 h-6" /></div>
    <div className="flex-1" />
    <svg className="w-[88px] h-5 mt-2.5" viewBox="0 0 88 20" fill="none" stroke="#fff" strokeWidth="1.200">
      <path d="M1.500 13L7 7.500l5.500 5.500" />
      <path d="M27 6.500h7v8h-7zM34 9l2.500-1.500v6L34 12M28 3.500q3-2 6 0M28 17.500q3 2 6 0" />
      <path d="M48 8h3l4-4v12l-4-4h-3zM57 8q1.500 2 0 4M59.500 6q3.500 4 0 8M62 4q5 6 0 12" />
      <path d="M75.500 5.500h11v8h-11zM72 3.500h4v4h-4zM74 8v8M79 16.500h6M81 14v2" />
    </svg>
    <div className="w-[66px] ml-0.5 text-center text-white leading-[18px] pt-0.5 whitespace-nowrap">
      <div>2:46 PM</div>
      <div>5/27/2026</div>
    </div>
    <svg className="w-4 h-4 ml-[11px] mr-5 mt-[13px]" viewBox="0 0 16 16" fill="none" stroke="#fff"><path d="M.5.500h15v11h-5L8 14.500l-2.500-3h-5z" /></svg>
    <div className="w-px bg-[#566070] mr-[4px]" />
  </div>
);

const App = () => {
  return (
    <div className="relative w-[1360px] h-[768px] overflow-hidden font-['Open_Sans',sans-serif] text-[12px] tracking-[-0.43px] bg-[linear-gradient(100deg,#00a5fd_0%,#00b2ff_24%,#0078e8_58%,#0752cc_82%,#093cbd_100%)]">
      <Desktop />
      <Explorer />
      <Watermark />
      <Taskbar />
    </div>
  );
};

export default App;
